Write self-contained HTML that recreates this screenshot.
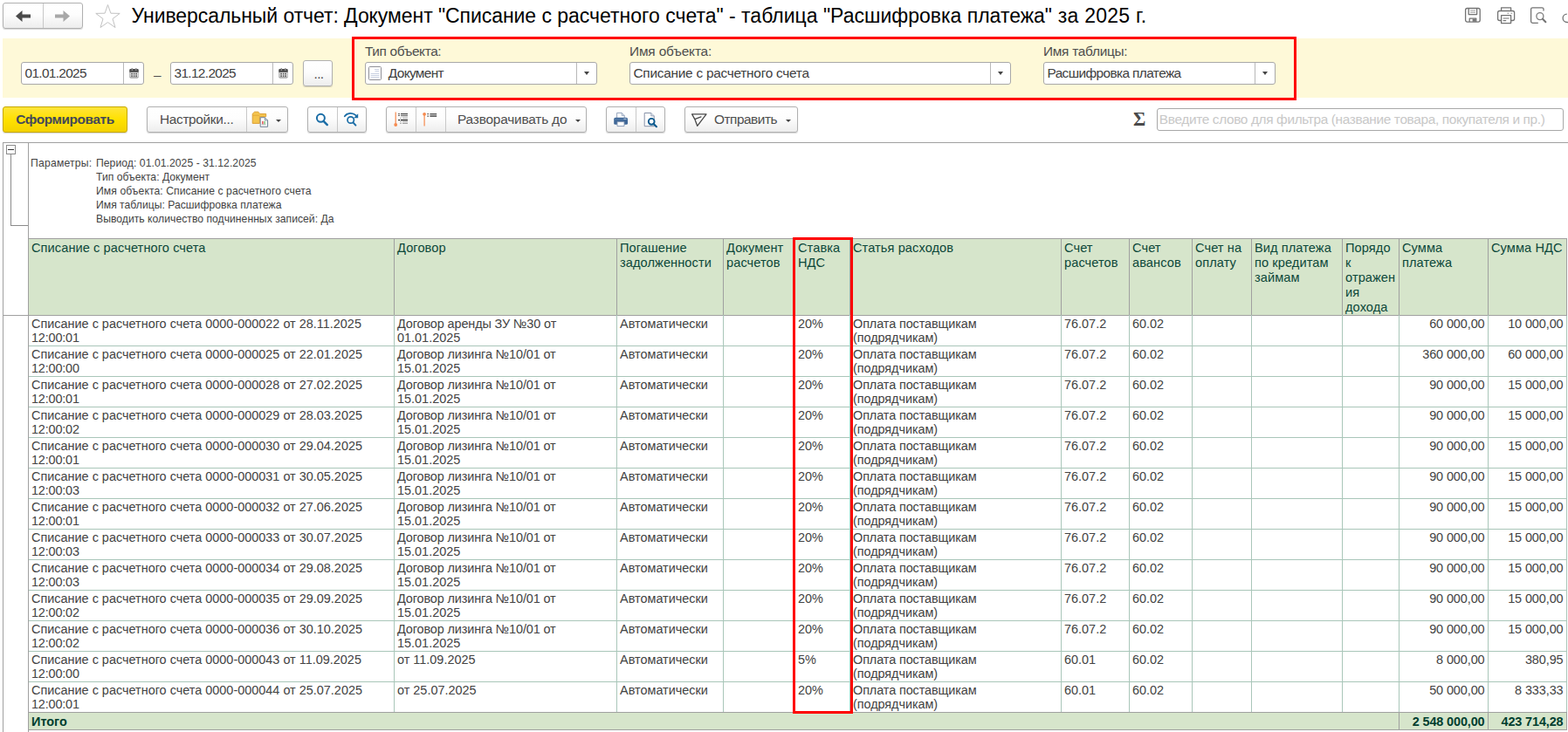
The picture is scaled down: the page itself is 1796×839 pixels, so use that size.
<!DOCTYPE html>
<html lang="ru">
<head>
<meta charset="utf-8">
<title>Универсальный отчет</title>
<style>
*{box-sizing:border-box;margin:0;padding:0}
html,body{width:1796px;height:839px;overflow:hidden;background:#fff}
body{font-family:"Liberation Sans",sans-serif;font-size:15.4px;color:#333;position:relative}
.abs{position:absolute}
.btn{position:absolute;border:1px solid #b0b0b0;border-radius:3px;background:linear-gradient(#ffffff 0%,#fdfdfd 45%,#ededed 100%);box-shadow:0 1px 1px rgba(0,0,0,.16)}
.btn .sep{position:absolute;top:0;bottom:0;width:1px;background:#c8c8c8}
.lbl{position:absolute;white-space:nowrap;line-height:17px;color:#4e4e4e}
.inp{position:absolute;border:1px solid #a8a8a8;border-radius:3px;background:#fff;height:26px}
.inp .sep{position:absolute;top:0;bottom:0;width:1px;background:#b8b8b8}
.inp .t{position:absolute;left:3.5px;top:3px;white-space:nowrap;line-height:17px;color:#404040}
.inp .tri{border-top-width:4px;margin-left:1px}
.tri{position:absolute;width:0;height:0;border-left:3px solid transparent;border-right:3px solid transparent;border-top:3.4px solid #444}
#title{position:absolute;left:150.5px;top:4px;font-size:23px;line-height:28px;color:#000;white-space:nowrap}
#band{position:absolute;left:3px;top:44px;width:1793px;height:68px;background:#fef9d8}
#red1{position:absolute;left:403px;top:42px;width:1082px;height:73px;border:3px solid #ff0000}
#red2{position:absolute;left:908px;top:272px;width:69px;height:546px;border:3px solid #ff0000}
#rep{position:absolute;left:3px;top:163px;width:1793px;height:676px;border-top:1px solid #a0a0a0;border-left:1px solid #a0a0a0}
.sheet{position:absolute;left:0;top:0;width:1796px;height:839px;font-size:14.45px;line-height:16px;color:#434343}
.hc{position:absolute;top:273px;height:89px;background:#d6e5cb;border-left:1px solid #a0a0a0;border-top:1px solid #a0a0a0;border-bottom:1px solid #a0a0a0;color:#0d483a;padding:2px 0 0 3px;font-size:14.6px;letter-spacing:0.08px;line-height:17px;white-space:nowrap;overflow:hidden}
.dc{position:absolute;height:36px;border-left:1px solid #a9c6b9;border-bottom:1px solid #a9c6b9;padding:2px 0 0 3px;white-space:nowrap;overflow:hidden}
.dc.num,.tc.num{text-align:right;padding-right:3.5px;padding-left:0;letter-spacing:-0.1px}
.tc.num{letter-spacing:-0.13px}
.tc{position:absolute;height:21px;background:#d6e5cb;border-top:1px solid #a0a0a0;border-bottom:1px solid #a0a0a0;color:#003e2f;font-weight:bold;padding:2px 0 0 4px;white-space:nowrap;overflow:hidden}
.tc.num{border-left:1px solid #a0a0a0}
.par{position:absolute;font-size:12.2px;line-height:16px;color:#434343;white-space:nowrap}
</style>
</head>
<body>
<!-- top bar -->
<div class="btn" style="left:3px;top:3px;width:92px;height:30px"><div class="sep" style="left:45px"></div>
<svg class="abs" style="left:0;top:0" width="91" height="27" viewBox="0 0 91 27"><path d="M14 14.5 L21.5 8 V12.5 H31 V16.5 H21.5 V21 Z" fill="#4a4a4a"/><path d="M76 14.5 L68.5 8 V12.5 H59 V16.5 H68.5 V21 Z" fill="#a8a8a8"/></svg>
</div>
<svg class="abs" style="left:106.8px;top:2.8px" width="34" height="32" viewBox="0 0 34 32"><path d="M16.5 2.5 L19.9 12.2 L30.2 12.4 L22 18.6 L25 28.5 L16.5 22.6 L8 28.5 L11 18.6 L2.8 12.4 L13.1 12.2 Z" fill="#fff" stroke="#c2c2c2" stroke-width="1"/></svg>
<div id="title"><span style="letter-spacing:-0.065px">Универсальный отчет: Документ "Списание с</span> расчетного счета" - таблица "Расшифровка платежа"<span style="letter-spacing:0.25px"> за 2025 г.</span></div>
<!--ICONS-->
<!-- band -->
<div id="band"></div>
<div class="inp" style="left:24px;top:71px;width:141px"><div class="t" style="letter-spacing:-0.27px;letter-spacing:-0.670px;margin-left:0.00px;margin-top:0.00px">01.01.2025</div><div class="sep" style="left:116px"></div></div>
<div class="lbl" style="left:176px;top:77px">–</div>
<div class="inp" style="left:195px;top:71px;width:141px"><div class="t" style="letter-spacing:-0.27px;letter-spacing:-0.650px;margin-left:0.00px;margin-top:0.00px">31.12.2025</div><div class="sep" style="left:116px"></div></div>
<div class="btn" style="left:347px;top:69px;width:34px;height:30px"><div class="lbl" style="left:11.5px;top:5.5px;color:#444;letter-spacing:-0.6px">...</div></div>

<div class="lbl" style="left:418px;top:50px;letter-spacing:-0.360px;margin-left:0.00px;margin-top:0.00px">Тип объекта:</div>
<div class="inp" style="left:418px;top:71px;width:266px"><div class="t" style="left:25px;letter-spacing:-0.643px;margin-left:0.81px;margin-top:0.00px">Документ</div><div class="sep" style="left:241px"></div><div class="tri" style="left:249px;top:10px"></div></div>
<div class="lbl" style="left:721px;top:50px;letter-spacing:-0.147px;margin-left:0.00px;margin-top:0.00px">Имя объекта:</div>
<div class="inp" style="left:721px;top:71px;width:437px"><div class="t" style="letter-spacing:-0.256px;margin-left:0.00px;margin-top:0.00px">Списание с расчетного счета</div><div class="sep" style="left:412px"></div><div class="tri" style="left:420px;top:10px"></div></div>
<div class="lbl" style="left:1195px;top:50px;letter-spacing:-0.270px;margin-left:0.00px;margin-top:0.00px">Имя таблицы:</div>
<div class="inp" style="left:1195px;top:71px;width:266px"><div class="t" style="letter-spacing:-0.600px;margin-left:0.00px;margin-top:0.00px">Расшифровка платежа</div><div class="sep" style="left:241px"></div><div class="tri" style="left:249px;top:10px"></div></div>
<div id="red1"></div>

<!-- toolbar -->
<div class="btn" style="left:3px;top:122px;width:143px;height:30px;background:linear-gradient(#ffe53a 0%,#ffe100 50%,#f3d200 100%);border-color:#c6a800"><div class="lbl" style="left:15px;top:5px;font-weight:bold;color:#434859;letter-spacing:-0.393px;margin-left:-0.70px;margin-top:0.00px">Сформировать</div></div>
<div class="btn" style="left:168px;top:122px;width:162px;height:30px"><div class="lbl" style="left:14px;top:5px;letter-spacing:-0.327px;margin-left:0.00px;margin-top:0.00px">Настройки...</div><div class="sep" style="left:113px"></div><div class="tri" style="left:147px;top:14.3px"></div></div>
<div class="btn" style="left:352px;top:122px;width:68px;height:30px"><div class="sep" style="left:33px"></div></div>
<div class="btn" style="left:442px;top:122px;width:230px;height:30px"><div class="sep" style="left:33px"></div><div class="sep" style="left:67px"></div><div class="lbl" style="left:81px;top:5px;letter-spacing:-0.186px;margin-left:0.00px;margin-top:0.00px">Разворачивать до</div><div class="tri" style="left:216px;top:14.3px"></div></div>
<div class="btn" style="left:694px;top:122px;width:68px;height:30px"><div class="sep" style="left:33px"></div></div>
<div class="btn" style="left:784px;top:122px;width:130px;height:30px"><div class="lbl" style="left:33px;top:5px;letter-spacing:-0.473px;margin-left:0.00px;margin-top:0.00px">Отправить</div><div class="tri" style="left:115px;top:14.3px"></div></div>
<div class="lbl" style="left:1297.5px;top:123px;font-family:'Liberation Serif',serif;font-weight:bold;font-size:24px;line-height:26px;color:#4a4a4a;transform:scaleX(.91);transform-origin:0 50%">Σ</div>
<div class="inp" style="left:1325px;top:124px;width:466px"><div class="t" style="left:3px;color:#c8c8c8;letter-spacing:-0.351px;margin-left:-1.17px;margin-top:0.00px">Введите слово для фильтра (название товара, покупателя и пр.)</div></div>

<svg class="abs" style="left:147.5px;top:77.8px" width="11.2" height="12" viewBox="0 0 12 13"><rect x="0.3" y="1.2" width="11.2" height="11.4" rx="1.6" fill="#a3a3a3"/><path d="M0.3 5.2V2.8a1.6 1.6 0 0 1 1.6-1.6h8a1.6 1.6 0 0 1 1.6 1.6v2.4z" fill="#4b4b4b"/><rect x="2.6" y="0.2" width="1.7" height="2.6" rx=".8" fill="#4b4b4b"/><rect x="7.6" y="0.2" width="1.7" height="2.6" rx=".8" fill="#4b4b4b"/><rect x="3" y="1.4" width=".9" height="1.6" fill="#ddd"/><rect x="8" y="1.4" width=".9" height="1.6" fill="#ddd"/><rect x="1.6" y="5.4" width="8.8" height="5.6" fill="#fff"/><g fill="#444"><rect x="2.4" y="6.2" width="1.8" height="1.9"/><rect x="5.1" y="6.2" width="1.8" height="1.9"/><rect x="7.8" y="6.2" width="1.8" height="1.9"/><rect x="2.4" y="9" width="1.8" height="1.7"/><rect x="5.1" y="9" width="1.8" height="1.7"/><rect x="7.8" y="9" width="1.8" height="1.7"/></g></svg>
<svg class="abs" style="left:318.5px;top:77.8px" width="11.2" height="12" viewBox="0 0 12 13"><rect x="0.3" y="1.2" width="11.2" height="11.4" rx="1.6" fill="#a3a3a3"/><path d="M0.3 5.2V2.8a1.6 1.6 0 0 1 1.6-1.6h8a1.6 1.6 0 0 1 1.6 1.6v2.4z" fill="#4b4b4b"/><rect x="2.6" y="0.2" width="1.7" height="2.6" rx=".8" fill="#4b4b4b"/><rect x="7.6" y="0.2" width="1.7" height="2.6" rx=".8" fill="#4b4b4b"/><rect x="3" y="1.4" width=".9" height="1.6" fill="#ddd"/><rect x="8" y="1.4" width=".9" height="1.6" fill="#ddd"/><rect x="1.6" y="5.4" width="8.8" height="5.6" fill="#fff"/><g fill="#444"><rect x="2.4" y="6.2" width="1.8" height="1.9"/><rect x="5.1" y="6.2" width="1.8" height="1.9"/><rect x="7.8" y="6.2" width="1.8" height="1.9"/><rect x="2.4" y="9" width="1.8" height="1.7"/><rect x="5.1" y="9" width="1.8" height="1.7"/><rect x="7.8" y="9" width="1.8" height="1.7"/></g></svg>
<svg class="abs" style="left:422px;top:76px" width="15" height="16" viewBox="0 0 15 16"><rect x="0.5" y="0.5" width="14" height="15" rx="1" fill="#fff" stroke="#8f8f96"/><g stroke="#c9d0e2" stroke-width="1"><path d="M7 3.5h5M7.5 5.5h4.5M2.5 8.5h10M2.5 10.5h10M2.5 12.5h10"/></g></svg>
<svg class="abs" style="left:288px;top:127px" width="21" height="20" viewBox="0 0 21 20"><path d="M1.2 14.4V3.4L3.6 1.2h4.2l1.9 2.3h7v3.2H9.4v7.7z" fill="#f4c44e" stroke="#d99a2b" stroke-width=".9"/><path d="M1.6 5.3h7.6" stroke="#e0a437" stroke-width=".8"/><path d="M10.2 7.7h5.2l3.2 3.2v7.4h-8.4z" fill="#fff" stroke="#6d7f93" stroke-width="1" stroke-linejoin="round"/><path d="M15.4 7.7v3.2h3.2" fill="#cfd8e3" stroke="#6d7f93" stroke-width=".8"/><rect x="12" y="11.8" width="1.7" height="3.6" fill="#e8646a"/><rect x="14.3" y="11.8" width="1.7" height="3.6" fill="#8fce8f"/><path d="M11.6 15.8h5" stroke="#9aa" stroke-width=".8"/></svg>
<svg class="abs" style="left:360px;top:128px" width="18" height="18" viewBox="0 0 18 18"><circle cx="7.4" cy="7.3" r="4.5" fill="none" stroke="#1b6da6" stroke-width="2"/><path d="M10.6 10.8l4.2 4.3" stroke="#1b6da6" stroke-width="2.4" stroke-linecap="round"/></svg>
<svg class="abs" style="left:392px;top:127px" width="20" height="19" viewBox="0 0 20 19"><path d="M2.8 6.2C5.6 2.4 11.6 1.6 15.6 5.2" fill="none" stroke="#1b6da6" stroke-width="1.8" stroke-linecap="round"/><path d="M18.2 3.2v5h-5.2z" fill="#1b6da6"/><circle cx="9.7" cy="10.5" r="3.7" fill="none" stroke="#1b6da6" stroke-width="1.7"/><path d="M12.4 13.4l3 3.2" stroke="#1b6da6" stroke-width="2" stroke-linecap="round"/></svg>
<svg class="abs" style="left:450px;top:127px" width="19" height="19" viewBox="0 0 19 19"><path d="M3.2 1.6v13" stroke="#f58a4e" stroke-width="1.2"/><circle cx="3.2" cy="16" r="1.9" fill="#f58a4e"/><g fill="#444"><rect x="6.2" y="3" width="1.6" height="1.2"/><rect x="9" y="3" width="8" height="1.2"/><rect x="6.2" y="5" width="1.6" height="1"/><rect x="9" y="5" width="8" height="1.2" fill="#777"/><rect x="6.2" y="10" width="2" height="1.2" fill="#111"/><rect x="9" y="10" width="8" height="1.2" fill="#111"/></g><g fill="#a0a0a0"><rect x="8.2" y="7.8" width="1.6" height="1"/><rect x="11" y="7.8" width="6" height="1"/><rect x="8.2" y="12.2" width="1.6" height="1"/><rect x="11" y="12.2" width="6" height="1"/><rect x="8.2" y="14" width="1.6" height="1"/><rect x="11" y="14" width="6" height="1"/><rect x="11" y="6.4" width="6" height=".7" fill="#ccc"/></g></svg>
<svg class="abs" style="left:483px;top:127px" width="19" height="19" viewBox="0 0 19 19"><path d="M3.1 4v13.6" stroke="#f58a4e" stroke-width="1.2"/><circle cx="3.1" cy="3.8" r="1.9" fill="#f58a4e"/><g fill="#555"><rect x="6.4" y="3" width="1.6" height="1.2"/><rect x="9.4" y="3" width="7.8" height="1.4"/><rect x="6.4" y="5.4" width="1.6" height="1.6" fill="#777"/><rect x="9.4" y="5.2" width="7.8" height="1.8" fill="#666"/></g></svg>
<svg class="abs" style="left:702px;top:128px" width="18" height="18" viewBox="0 0 18 18"><path d="M4.6 7V1.4h5.6l3 3V7" fill="#fff" stroke="#8a9bb5" stroke-width=".9"/><path d="M10.2 1.4v3h3" fill="#dfe6f0" stroke="#8a9bb5" stroke-width=".8"/><rect x="1.2" y="6.8" width="15.8" height="8" rx="1.6" fill="#3f6797"/><rect x="1.8" y="8.3" width="14.6" height="1" fill="#5a80ad"/><rect x="12.4" y="7.8" width="3" height=".9" fill="#c9d6e6"/><path d="M5 11.6h8v5H5z" fill="#fff" stroke="#7f93b0" stroke-width=".9"/></svg>
<svg class="abs" style="left:736px;top:128px" width="18" height="19" viewBox="0 0 18 19"><path d="M2.2 1.5h7.6l3.4 3.4v11.8H2.2z" fill="#fff" stroke="#8792a8" stroke-width="1"/><path d="M9.8 1.5v3.4h3.4" fill="#dfe6f0" stroke="#8792a8" stroke-width=".8"/><circle cx="10.2" cy="11.3" r="3.4" fill="#fff" stroke="#0b5a8e" stroke-width="1.9"/><path d="M12.7 14l3.2 3.2" stroke="#0b5a8e" stroke-width="2.2" stroke-linecap="round"/></svg>
<svg class="abs" style="left:790px;top:128px" width="22" height="18" viewBox="0 0 22 18"><path d="M2.6 2.9L19 2.8 8.7 16.3 5.8 8.6z M5.8 8.6L13 5.9" fill="none" stroke="#484848" stroke-width="1.3" stroke-linejoin="round" stroke-linecap="round"/></svg>
<svg class="abs" style="left:1676px;top:6px" width="120" height="24" viewBox="0 0 120 24"><g fill="none" stroke="#737373" stroke-width="1.3" stroke-linejoin="round">
<rect x="2.6" y="3.5" width="16.6" height="15.6" rx="2"/>
<path d="M6.2 3.8v6.8h9.4V3.8M7.2 19v-3.8h7.6V19"/>
<path d="M8 6.2h6M8 8.3h6" stroke-width=".9" stroke="#999"/>
<path d="M43.6 6.3V2.8h11v3.5"/>
<rect x="39.6" y="6.5" width="19" height="11" rx="2"/>
<path d="M43.6 11.6h11v9h-11z" fill="#fff"/>
<path d="M45.6 15h7M45.6 17.6h3.6" stroke-width="1.1"/>
<path d="M50.5 9.2h1.8M54.4 9.2h1.8" stroke-width="1.1" stroke="#8a8a8a"/>
<path d="M92 6.4V4.6a1.8 1.8 0 0 0-1.8-1.8H79.4a1.8 1.8 0 0 0-1.8 1.8v14a1.8 1.8 0 0 0 1.8 1.8h6.4"/>
<circle cx="87.9" cy="12.6" r="4" stroke="#7d7d7d"/>
<path d="M91 15.8l3.4 3.4" stroke-width="2" stroke-linecap="round"/>
<path d="M118.8 10.1A4.7 4.7 0 0 0 118.8 19.5L120 19.6" />
</g><rect x="10.6" y="15.6" width="3.6" height="3.2" fill="#777"/></svg>
<!-- report -->
<div id="rep"></div>
<div class="abs" style="left:7px;top:166px;width:11px;height:11px;border:1px solid #8a8a8a;background:#fff"></div>
<div class="abs" style="left:9px;top:171px;width:7px;height:1px;background:#333"></div>
<div class="abs" style="left:12px;top:177px;width:1px;height:82px;background:#8a8a8a"></div>
<div class="abs" style="left:12px;top:258px;width:20px;height:1px;background:#8a8a8a"></div>
<div class="abs" style="left:3px;top:361px;width:30px;height:1px;background:#a0a0a0"></div>
<div class="par" style="left:35px;top:179px;letter-spacing:0.2px">Параметры:</div>
<div class="par" style="left:110px;top:179px"><span style="letter-spacing:0.04px">Период: 01.01.2025 - 31.12.2025</span><br>Тип объекта: Документ<br><span style="letter-spacing:0.063px">Имя объекта: Списание с расчетного счета</span><br>Имя таблицы: Расшифровка платежа<br><span style="letter-spacing:0.012px">Выводить количество подчиненных записей: Да</span></div>
<div class="sheet">
<div class="hc" style="left:32px;width:419px">Списание с расчетного счета</div>
<div class="hc" style="left:451px;width:255px">Договор</div>
<div class="hc" style="left:706px;width:122px">Погашение<br>задолженности</div>
<div class="hc" style="left:828px;width:82px">Документ<br>расчетов</div>
<div class="hc" style="left:910px;width:63px">Ставка<br>НДС</div>
<div class="hc" style="left:973px;width:242px">Статья расходов</div>
<div class="hc" style="left:1215px;width:78px">Счет<br>расчетов</div>
<div class="hc" style="left:1293px;width:72px">Счет<br>авансов</div>
<div class="hc" style="left:1365px;width:68px">Счет на<br>оплату</div>
<div class="hc" style="left:1433px;width:104px">Вид платежа<br>по кредитам<br>займам</div>
<div class="hc" style="left:1537px;width:65px">Порядо<br>к<br>отражен<br>ия<br>дохода</div>
<div class="hc" style="left:1602px;width:102px">Сумма<br>платежа</div>
<div class="hc" style="left:1704px;width:90px">Сумма НДС</div>
<div class="dc" style="left:32px;top:361px;width:419px">Списание с расчетного счета 0000-000022 от 28.11.2025<br><span style="letter-spacing:-0.18px">12:00:01</span></div>
<div class="dc" style="left:451px;top:361px;width:255px"><span style="letter-spacing:-0.12px">Договор аренды ЗУ №30 от</span><br>01.01.2025</div>
<div class="dc" style="left:706px;top:361px;width:122px">Автоматически</div>
<div class="dc" style="left:828px;top:361px;width:82px"></div>
<div class="dc" style="left:910px;top:361px;width:63px">20%</div>
<div class="dc" style="left:973px;top:361px;width:242px"><span style="letter-spacing:-0.1px">Оплата поставщикам</span><br><span style="letter-spacing:-0.06px">(подрядчикам)</span></div>
<div class="dc" style="left:1215px;top:361px;width:78px">76.07.2</div>
<div class="dc" style="left:1293px;top:361px;width:72px">60.02</div>
<div class="dc" style="left:1365px;top:361px;width:68px"></div>
<div class="dc" style="left:1433px;top:361px;width:104px"></div>
<div class="dc" style="left:1537px;top:361px;width:65px"></div>
<div class="dc num" style="left:1602px;top:361px;width:102px">60 000,00</div>
<div class="dc num" style="left:1704px;top:361px;width:90px">10 000,00</div>
<div class="dc" style="left:32px;top:396px;width:419px">Списание с расчетного счета 0000-000025 от 22.01.2025<br><span style="letter-spacing:-0.18px">12:00:00</span></div>
<div class="dc" style="left:451px;top:396px;width:255px"><span style="letter-spacing:-0.12px">Договор лизинга №10/01 от</span><br>15.01.2025</div>
<div class="dc" style="left:706px;top:396px;width:122px">Автоматически</div>
<div class="dc" style="left:828px;top:396px;width:82px"></div>
<div class="dc" style="left:910px;top:396px;width:63px">20%</div>
<div class="dc" style="left:973px;top:396px;width:242px"><span style="letter-spacing:-0.1px">Оплата поставщикам</span><br><span style="letter-spacing:-0.06px">(подрядчикам)</span></div>
<div class="dc" style="left:1215px;top:396px;width:78px">76.07.2</div>
<div class="dc" style="left:1293px;top:396px;width:72px">60.02</div>
<div class="dc" style="left:1365px;top:396px;width:68px"></div>
<div class="dc" style="left:1433px;top:396px;width:104px"></div>
<div class="dc" style="left:1537px;top:396px;width:65px"></div>
<div class="dc num" style="left:1602px;top:396px;width:102px">360 000,00</div>
<div class="dc num" style="left:1704px;top:396px;width:90px">60 000,00</div>
<div class="dc" style="left:32px;top:431px;width:419px">Списание с расчетного счета 0000-000028 от 27.02.2025<br><span style="letter-spacing:-0.18px">12:00:01</span></div>
<div class="dc" style="left:451px;top:431px;width:255px"><span style="letter-spacing:-0.12px">Договор лизинга №10/01 от</span><br>15.01.2025</div>
<div class="dc" style="left:706px;top:431px;width:122px">Автоматически</div>
<div class="dc" style="left:828px;top:431px;width:82px"></div>
<div class="dc" style="left:910px;top:431px;width:63px">20%</div>
<div class="dc" style="left:973px;top:431px;width:242px"><span style="letter-spacing:-0.1px">Оплата поставщикам</span><br><span style="letter-spacing:-0.06px">(подрядчикам)</span></div>
<div class="dc" style="left:1215px;top:431px;width:78px">76.07.2</div>
<div class="dc" style="left:1293px;top:431px;width:72px">60.02</div>
<div class="dc" style="left:1365px;top:431px;width:68px"></div>
<div class="dc" style="left:1433px;top:431px;width:104px"></div>
<div class="dc" style="left:1537px;top:431px;width:65px"></div>
<div class="dc num" style="left:1602px;top:431px;width:102px">90 000,00</div>
<div class="dc num" style="left:1704px;top:431px;width:90px">15 000,00</div>
<div class="dc" style="left:32px;top:466px;width:419px">Списание с расчетного счета 0000-000029 от 28.03.2025<br><span style="letter-spacing:-0.18px">12:00:02</span></div>
<div class="dc" style="left:451px;top:466px;width:255px"><span style="letter-spacing:-0.12px">Договор лизинга №10/01 от</span><br>15.01.2025</div>
<div class="dc" style="left:706px;top:466px;width:122px">Автоматически</div>
<div class="dc" style="left:828px;top:466px;width:82px"></div>
<div class="dc" style="left:910px;top:466px;width:63px">20%</div>
<div class="dc" style="left:973px;top:466px;width:242px"><span style="letter-spacing:-0.1px">Оплата поставщикам</span><br><span style="letter-spacing:-0.06px">(подрядчикам)</span></div>
<div class="dc" style="left:1215px;top:466px;width:78px">76.07.2</div>
<div class="dc" style="left:1293px;top:466px;width:72px">60.02</div>
<div class="dc" style="left:1365px;top:466px;width:68px"></div>
<div class="dc" style="left:1433px;top:466px;width:104px"></div>
<div class="dc" style="left:1537px;top:466px;width:65px"></div>
<div class="dc num" style="left:1602px;top:466px;width:102px">90 000,00</div>
<div class="dc num" style="left:1704px;top:466px;width:90px">15 000,00</div>
<div class="dc" style="left:32px;top:501px;width:419px">Списание с расчетного счета 0000-000030 от 29.04.2025<br><span style="letter-spacing:-0.18px">12:00:01</span></div>
<div class="dc" style="left:451px;top:501px;width:255px"><span style="letter-spacing:-0.12px">Договор лизинга №10/01 от</span><br>15.01.2025</div>
<div class="dc" style="left:706px;top:501px;width:122px">Автоматически</div>
<div class="dc" style="left:828px;top:501px;width:82px"></div>
<div class="dc" style="left:910px;top:501px;width:63px">20%</div>
<div class="dc" style="left:973px;top:501px;width:242px"><span style="letter-spacing:-0.1px">Оплата поставщикам</span><br><span style="letter-spacing:-0.06px">(подрядчикам)</span></div>
<div class="dc" style="left:1215px;top:501px;width:78px">76.07.2</div>
<div class="dc" style="left:1293px;top:501px;width:72px">60.02</div>
<div class="dc" style="left:1365px;top:501px;width:68px"></div>
<div class="dc" style="left:1433px;top:501px;width:104px"></div>
<div class="dc" style="left:1537px;top:501px;width:65px"></div>
<div class="dc num" style="left:1602px;top:501px;width:102px">90 000,00</div>
<div class="dc num" style="left:1704px;top:501px;width:90px">15 000,00</div>
<div class="dc" style="left:32px;top:536px;width:419px">Списание с расчетного счета 0000-000031 от 30.05.2025<br><span style="letter-spacing:-0.18px">12:00:03</span></div>
<div class="dc" style="left:451px;top:536px;width:255px"><span style="letter-spacing:-0.12px">Договор лизинга №10/01 от</span><br>15.01.2025</div>
<div class="dc" style="left:706px;top:536px;width:122px">Автоматически</div>
<div class="dc" style="left:828px;top:536px;width:82px"></div>
<div class="dc" style="left:910px;top:536px;width:63px">20%</div>
<div class="dc" style="left:973px;top:536px;width:242px"><span style="letter-spacing:-0.1px">Оплата поставщикам</span><br><span style="letter-spacing:-0.06px">(подрядчикам)</span></div>
<div class="dc" style="left:1215px;top:536px;width:78px">76.07.2</div>
<div class="dc" style="left:1293px;top:536px;width:72px">60.02</div>
<div class="dc" style="left:1365px;top:536px;width:68px"></div>
<div class="dc" style="left:1433px;top:536px;width:104px"></div>
<div class="dc" style="left:1537px;top:536px;width:65px"></div>
<div class="dc num" style="left:1602px;top:536px;width:102px">90 000,00</div>
<div class="dc num" style="left:1704px;top:536px;width:90px">15 000,00</div>
<div class="dc" style="left:32px;top:571px;width:419px">Списание с расчетного счета 0000-000032 от 27.06.2025<br><span style="letter-spacing:-0.18px">12:00:01</span></div>
<div class="dc" style="left:451px;top:571px;width:255px"><span style="letter-spacing:-0.12px">Договор лизинга №10/01 от</span><br>15.01.2025</div>
<div class="dc" style="left:706px;top:571px;width:122px">Автоматически</div>
<div class="dc" style="left:828px;top:571px;width:82px"></div>
<div class="dc" style="left:910px;top:571px;width:63px">20%</div>
<div class="dc" style="left:973px;top:571px;width:242px"><span style="letter-spacing:-0.1px">Оплата поставщикам</span><br><span style="letter-spacing:-0.06px">(подрядчикам)</span></div>
<div class="dc" style="left:1215px;top:571px;width:78px">76.07.2</div>
<div class="dc" style="left:1293px;top:571px;width:72px">60.02</div>
<div class="dc" style="left:1365px;top:571px;width:68px"></div>
<div class="dc" style="left:1433px;top:571px;width:104px"></div>
<div class="dc" style="left:1537px;top:571px;width:65px"></div>
<div class="dc num" style="left:1602px;top:571px;width:102px">90 000,00</div>
<div class="dc num" style="left:1704px;top:571px;width:90px">15 000,00</div>
<div class="dc" style="left:32px;top:606px;width:419px">Списание с расчетного счета 0000-000033 от 30.07.2025<br><span style="letter-spacing:-0.18px">12:00:03</span></div>
<div class="dc" style="left:451px;top:606px;width:255px"><span style="letter-spacing:-0.12px">Договор лизинга №10/01 от</span><br>15.01.2025</div>
<div class="dc" style="left:706px;top:606px;width:122px">Автоматически</div>
<div class="dc" style="left:828px;top:606px;width:82px"></div>
<div class="dc" style="left:910px;top:606px;width:63px">20%</div>
<div class="dc" style="left:973px;top:606px;width:242px"><span style="letter-spacing:-0.1px">Оплата поставщикам</span><br><span style="letter-spacing:-0.06px">(подрядчикам)</span></div>
<div class="dc" style="left:1215px;top:606px;width:78px">76.07.2</div>
<div class="dc" style="left:1293px;top:606px;width:72px">60.02</div>
<div class="dc" style="left:1365px;top:606px;width:68px"></div>
<div class="dc" style="left:1433px;top:606px;width:104px"></div>
<div class="dc" style="left:1537px;top:606px;width:65px"></div>
<div class="dc num" style="left:1602px;top:606px;width:102px">90 000,00</div>
<div class="dc num" style="left:1704px;top:606px;width:90px">15 000,00</div>
<div class="dc" style="left:32px;top:641px;width:419px">Списание с расчетного счета 0000-000034 от 29.08.2025<br><span style="letter-spacing:-0.18px">12:00:03</span></div>
<div class="dc" style="left:451px;top:641px;width:255px"><span style="letter-spacing:-0.12px">Договор лизинга №10/01 от</span><br>15.01.2025</div>
<div class="dc" style="left:706px;top:641px;width:122px">Автоматически</div>
<div class="dc" style="left:828px;top:641px;width:82px"></div>
<div class="dc" style="left:910px;top:641px;width:63px">20%</div>
<div class="dc" style="left:973px;top:641px;width:242px"><span style="letter-spacing:-0.1px">Оплата поставщикам</span><br><span style="letter-spacing:-0.06px">(подрядчикам)</span></div>
<div class="dc" style="left:1215px;top:641px;width:78px">76.07.2</div>
<div class="dc" style="left:1293px;top:641px;width:72px">60.02</div>
<div class="dc" style="left:1365px;top:641px;width:68px"></div>
<div class="dc" style="left:1433px;top:641px;width:104px"></div>
<div class="dc" style="left:1537px;top:641px;width:65px"></div>
<div class="dc num" style="left:1602px;top:641px;width:102px">90 000,00</div>
<div class="dc num" style="left:1704px;top:641px;width:90px">15 000,00</div>
<div class="dc" style="left:32px;top:676px;width:419px">Списание с расчетного счета 0000-000035 от 29.09.2025<br><span style="letter-spacing:-0.18px">12:00:02</span></div>
<div class="dc" style="left:451px;top:676px;width:255px"><span style="letter-spacing:-0.12px">Договор лизинга №10/01 от</span><br>15.01.2025</div>
<div class="dc" style="left:706px;top:676px;width:122px">Автоматически</div>
<div class="dc" style="left:828px;top:676px;width:82px"></div>
<div class="dc" style="left:910px;top:676px;width:63px">20%</div>
<div class="dc" style="left:973px;top:676px;width:242px"><span style="letter-spacing:-0.1px">Оплата поставщикам</span><br><span style="letter-spacing:-0.06px">(подрядчикам)</span></div>
<div class="dc" style="left:1215px;top:676px;width:78px">76.07.2</div>
<div class="dc" style="left:1293px;top:676px;width:72px">60.02</div>
<div class="dc" style="left:1365px;top:676px;width:68px"></div>
<div class="dc" style="left:1433px;top:676px;width:104px"></div>
<div class="dc" style="left:1537px;top:676px;width:65px"></div>
<div class="dc num" style="left:1602px;top:676px;width:102px">90 000,00</div>
<div class="dc num" style="left:1704px;top:676px;width:90px">15 000,00</div>
<div class="dc" style="left:32px;top:711px;width:419px">Списание с расчетного счета 0000-000036 от 30.10.2025<br><span style="letter-spacing:-0.18px">12:00:02</span></div>
<div class="dc" style="left:451px;top:711px;width:255px"><span style="letter-spacing:-0.12px">Договор лизинга №10/01 от</span><br>15.01.2025</div>
<div class="dc" style="left:706px;top:711px;width:122px">Автоматически</div>
<div class="dc" style="left:828px;top:711px;width:82px"></div>
<div class="dc" style="left:910px;top:711px;width:63px">20%</div>
<div class="dc" style="left:973px;top:711px;width:242px"><span style="letter-spacing:-0.1px">Оплата поставщикам</span><br><span style="letter-spacing:-0.06px">(подрядчикам)</span></div>
<div class="dc" style="left:1215px;top:711px;width:78px">76.07.2</div>
<div class="dc" style="left:1293px;top:711px;width:72px">60.02</div>
<div class="dc" style="left:1365px;top:711px;width:68px"></div>
<div class="dc" style="left:1433px;top:711px;width:104px"></div>
<div class="dc" style="left:1537px;top:711px;width:65px"></div>
<div class="dc num" style="left:1602px;top:711px;width:102px">90 000,00</div>
<div class="dc num" style="left:1704px;top:711px;width:90px">15 000,00</div>
<div class="dc" style="left:32px;top:746px;width:419px">Списание с расчетного счета 0000-000043 от 11.09.2025<br><span style="letter-spacing:-0.18px">12:00:00</span></div>
<div class="dc" style="left:451px;top:746px;width:255px">от 11.09.2025</div>
<div class="dc" style="left:706px;top:746px;width:122px">Автоматически</div>
<div class="dc" style="left:828px;top:746px;width:82px"></div>
<div class="dc" style="left:910px;top:746px;width:63px">5%</div>
<div class="dc" style="left:973px;top:746px;width:242px"><span style="letter-spacing:-0.1px">Оплата поставщикам</span><br><span style="letter-spacing:-0.06px">(подрядчикам)</span></div>
<div class="dc" style="left:1215px;top:746px;width:78px">60.01</div>
<div class="dc" style="left:1293px;top:746px;width:72px">60.02</div>
<div class="dc" style="left:1365px;top:746px;width:68px"></div>
<div class="dc" style="left:1433px;top:746px;width:104px"></div>
<div class="dc" style="left:1537px;top:746px;width:65px"></div>
<div class="dc num" style="left:1602px;top:746px;width:102px">8 000,00</div>
<div class="dc num" style="left:1704px;top:746px;width:90px">380,95</div>
<div class="dc" style="left:32px;top:781px;width:419px">Списание с расчетного счета 0000-000044 от 25.07.2025<br><span style="letter-spacing:-0.18px">12:00:01</span></div>
<div class="dc" style="left:451px;top:781px;width:255px">от 25.07.2025</div>
<div class="dc" style="left:706px;top:781px;width:122px">Автоматически</div>
<div class="dc" style="left:828px;top:781px;width:82px"></div>
<div class="dc" style="left:910px;top:781px;width:63px">20%</div>
<div class="dc" style="left:973px;top:781px;width:242px"><span style="letter-spacing:-0.1px">Оплата поставщикам</span><br><span style="letter-spacing:-0.06px">(подрядчикам)</span></div>
<div class="dc" style="left:1215px;top:781px;width:78px">60.01</div>
<div class="dc" style="left:1293px;top:781px;width:72px">60.02</div>
<div class="dc" style="left:1365px;top:781px;width:68px"></div>
<div class="dc" style="left:1433px;top:781px;width:104px"></div>
<div class="dc" style="left:1537px;top:781px;width:65px"></div>
<div class="dc num" style="left:1602px;top:781px;width:102px">50 000,00</div>
<div class="dc num" style="left:1704px;top:781px;width:90px">8 333,33</div>
<div class="tc" style="left:32px;top:816px;width:1570px">Итого</div>
<div class="tc num" style="left:1602px;top:816px;width:102px">2 548 000,00</div>
<div class="tc num" style="left:1704px;top:816px;width:90px">423 714,28</div>
</div>
<div class="abs" style="left:1794px;top:273px;width:1px;height:564px;background:#a9c6b9"></div><div class="abs" style="left:1794px;top:273px;width:1px;height:89px;background:#a0a0a0"></div><div class="abs" style="left:1794px;top:816px;width:1px;height:21px;background:#a0a0a0"></div>
<div class="abs" style="left:32px;top:163px;width:1px;height:676px;background:#a0a0a0"></div>
<div id="red2"></div>
</body>
</html>
